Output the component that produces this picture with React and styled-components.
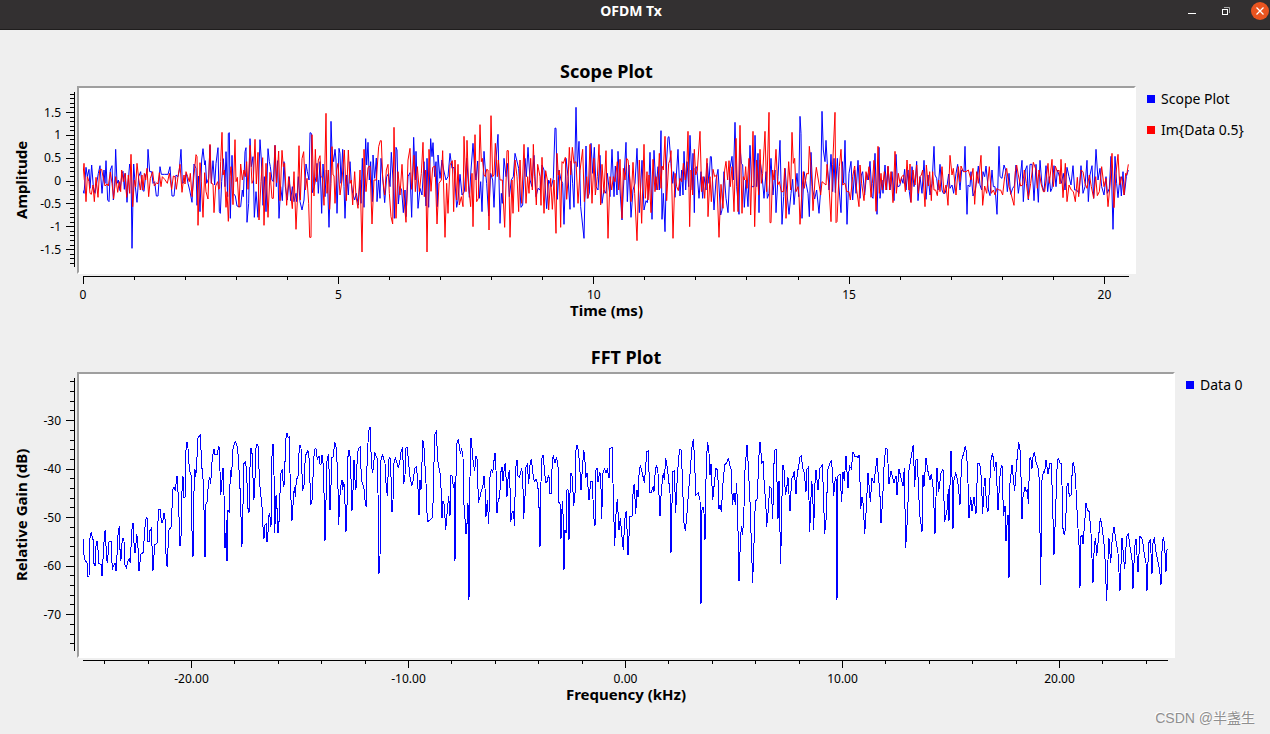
import React from "react";
import styled, { createGlobalStyle } from "styled-components";

const GlobalStyle = createGlobalStyle`
  *, *::before, *::after { box-sizing: border-box; }
  body {
    margin: 0;
    background: #efefef;
    color: #000;
    font-family: "Noto Sans", "Open Sans", "Noto Sans CJK SC", sans-serif;
  }
`;

/* Traces are kept as runs of "x,y" samples, each run with its own origin. */
const SCOPE_RE = [
  [0, 180, "248,390 252,400 258,322 262,350 267,328 270,385 275,315 280,380 285,400 290,370 295,340 300,317 306,400 312,330 315,370 318,302 323,420 327,425 331,330 336,317 340,420 344,380 347,268 351,370 355,360 360,392 366,340 369,334 373,388 376,340 381,427 385,360 389,312 393,330 396,565 401,312 406,380 411,427 416,350 422,335 427,390 432,394 437,345 442,335 444,268 449,335 455,335 459,370 464,365 469,408 474,408 480,320 484,343 494,343 504,343 510,320 516,408 522,408 528,345 534,350 538,330 543,268 547,370 553,365 559,340 564,370 569,390 576,427 582,312 588,325 591,436 595,348 600,455 605,300 609,266 614,315 616,302 620,370 626,355 630,256 634,370 639,302 644,375 648,310 654,263 658,455 661,460 665,365 670,296 675,380 678,275 683,410 685,220 688,218 691,475 696,286 700,400 706,408 711,438 717,440 722,440 727,390 730,410 735,275 738,263 741,487 746,430 750,236 754,320 759,290 763,472 768,395 774,472 777,330 780,239 784,300 789,436 793,350 798,455 804,266 808,305 811,320 816,360 820,365 825,256 829,380 833,302 837,475 842,380 847,422 852,305 856,380 862,420 868,350 872,422 877,380 882,425 888,400 890,425 895,350 900,425 906,450 912,420 918,312 922,335 927,360 930,218 934,220 937,398 943,380 948,350 951,310 955,400 960,305 965,460 969,312 975,410 979,330 983,380 987,502 990,400 993,184 996,270 1001,305 1005,268 1008,300 1011,460 1017,265"],
  [1020, 240, "0,220 3,310 8,208 12,320 15,415 20,285 25,345 30,245 34,310 38,340 44,360 49,340 55,375 60,300 63,370 67,235 72,382 77,176 80,255 84,187 88,300 92,245 97,365 99,225 104,295 109,234 111,365 116,300 120,355 123,235 128,290 134,368 140,290 146,280 150,320 154,217 159,300 163,415 168,202 171,210 175,372 180,320 185,330 190,398 195,330 198,410 204,290 210,278 215,412 221,172 226,300 228,214 234,385 240,325 246,345 252,245 258,378 261,235 266,382 272,176 276,230 279,188 284,290 288,245 292,380 294,225 300,295 306,240 311,270 318,300 324,290 330,220 336,265 342,262 350,382 354,360 360,283 366,345 373,335 380,235 388,352 393,270 399,190 403,250 408,300 413,243 418,355 422,305 426,395 432,214 436,270 440,310 446,408 452,280 458,300 462,382 468,240 474,163 480,430 484,340 487,370 492,235 498,290 502,250 508,350 514,300 520,290 525,220 530,240 536,265 543,382 548,375 555,235 559,290 564,202 570,300 576,320 582,226 588,350 594,325 600,330 606,255 612,270 620,386 626,300 634,320 640,295 645,144 648,145 652,358 657,270 663,300 668,310 672,433 678,235 684,290 690,388 693,243 698,310 702,382 708,82 712,260 717,184 722,380 732,475 738,198 742,355 748,340 753,190 758,280 763,202 768,320 774,330"],
  [1800, 240, "0,226 6,370 12,330 18,340 22,280 30,350 36,208 42,350 46,258 51,345 54,214 60,330 66,420 70,330 78,187 82,365 87,255 93,412 99,330 105,310 111,205 118,398 126,241 132,390 138,362 142,368 146,330 150,217 156,418 162,211 168,330 174,260 178,330 183,152 186,418 190,340 195,455 200,240 204,172 207,170 213,250 218,310 221,275 225,352 230,270 234,208 240,348 245,270 249,345 252,214 257,330 261,245 266,320 270,166 277,330 279,220 283,398 285,265 290,260 297,355 303,275 308,355 312,290 318,330 322,250 327,310 331,230 334,230 342,390 348,300 354,268 362,405 366,390 372,275 378,355 384,398 390,265 396,229 400,300 405,127 410,320 417,403 420,200 424,250 428,255 433,382 438,300 444,380 450,196 455,320 462,320 465,166 470,320 474,220 477,398 480,240 486,285 492,355 498,275 502,355 507,340 513,235 519,345 525,270 528,398 534,290 540,181 546,433 551,350 555,265 560,330 567,403 573,340 578,298 582,374 586,330 591,280 596,350 600,109 603,160 606,415 612,275 618,310 624,340 628,410 633,217 638,330 644,357 650,330 657,400 662,330 666,94 670,210 675,245 678,181 683,270 687,330 693,223 698,335 702,235 706,338 712,235 716,310 723,398 727,245 731,310 735,181 741,433 747,280 753,244 758,360 764,270 768,340 774,241"],
  [2580, 240, "0,355 4,285 8,275 14,345 20,280 25,300 30,244 36,350 39,355 45,220 51,403 57,202 60,355 66,300 69,340 75,255 80,330 84,260 90,330 96,275 102,362 108,223 113,320 119,318 125,295 129,310 134,268 138,330 144,270 148,335 152,365 156,260 162,320 166,300 170,244 174,362 180,290 186,340 192,241 198,358 204,285 210,345 216,310 222,199 225,285 230,295 234,330 240,253 246,330 250,340 255,340 261,318 266,282 270,325 276,315 281,340 288,280 293,253 300,330 305,270 312,275 315,199 321,403 324,315 330,320 333,275 339,348 346,330 350,300 355,258 360,315 365,330 369,275 374,290 378,258 385,330 390,347 396,270 400,320 405,320 411,403 417,199 420,290 426,295 432,255 437,270 442,335 447,280 452,343 458,325 463,318 468,255 475,340 480,300 486,241 490,365 496,270 501,257 505,360 510,253 516,253 522,362 528,253 535,367 540,241 546,315 552,335 558,257 563,335 568,290 572,335 576,325 582,257 588,320 592,270 597,285 604,310 610,280 615,330 621,262 627,290 633,315 639,257 644,330 650,330 657,340 663,257 669,340 675,320 681,241 685,365 690,285 696,257 701,355 708,208 714,300 720,265 725,320 732,345 738,290 742,340 748,325 753,229 759,448 765,229 770,310 774,353 780,290 784,348 789,275 793,345 799,290 805,270"],
];

const SCOPE_IM = [
  [0, 180, "248,360 252,310 258,425 262,350 267,365 270,400 274,403 279,375 283,425 288,352 294,412 299,330 305,328 309,350 315,378 321,372 325,378 331,336 336,370 341,416 347,350 353,397 358,365 362,395 365,330 370,365 375,340 380,412 385,345 389,400 393,283 398,440 403,360 407,380 411,310 416,355 421,390 426,345 429,390 433,340 437,360 441,325 446,410 451,355 458,335 463,378 470,368 474,372 478,338 483,380 487,350 494,358 502,370 508,340 515,388 520,348 525,350 529,388 534,350 540,313 546,397 552,345 555,372 558,335 563,350 568,365 571,340 576,410 582,345 588,284 591,290 594,496 600,308 604,365 609,472 614,338 618,395 624,417 627,330 630,253 634,370 639,372 642,458 647,378 653,365 656,388 659,385 662,305 666,217 669,345 673,330 678,442 681,395 685,484 690,350 693,320 699,434 705,239 708,365 712,352 717,442 722,312 727,360 732,330 736,350 740,305 744,388 750,256 756,370 760,360 765,238 769,372 774,277 777,480 783,365 788,293 792,496 798,310 804,472 810,337 816,415 820,415 825,256 830,368 836,273 840,422 846,271 850,320 854,310 860,436 866,350 872,400 877,446 882,335 888,508 893,400 897,257 901,420 906,296 911,275 916,390 921,355 926,430 929,532 933,532 936,224 942,408 946,268 950,365 955,300 960,287 963,350 967,352 972,436 978,160 981,400 985,330 989,448 993,370 996,260 999,345 1002,347 1005,430 1010,330 1014,310"],
  [1020, 240, "0,345 6,300 13,210 19,362 25,210 30,310 34,300 38,375 44,275 48,350 54,385 60,270 66,516 72,208 78,335 84,262 90,258 96,432 102,300 109,300 116,200 121,182 124,182 128,295 134,345 139,270 144,253 148,340 153,410 158,432 162,142 168,415 174,275 180,345 186,253 192,360 198,427 204,240 210,205 215,328 222,226 226,335 232,260 238,335 244,280 249,187 253,350 257,270 261,516 267,208 273,334 278,262 285,258 291,432 297,310 304,300 308,212 315,472 320,310 324,400 330,255 337,242 341,395 345,240 350,360 354,253 358,375 364,350 369,380 372,169 378,335 381,181 386,320 392,380 396,280 399,440 405,164 410,365 415,355 420,134 424,245 427,235 432,285 436,290 440,268 444,270 447,450 453,107 458,290 462,285 466,190 472,290 475,240 480,300 487,300 494,442 501,212 505,212 510,472 516,300 519,400 525,240 531,290 536,395 540,240 545,370 552,193 558,370 563,290 567,340 572,235 577,330 580,193 584,290 589,375 593,253 600,290 603,376 606,232 612,400 617,272 622,300 626,390 632,295 637,388 642,300 648,460 651,220 655,285 658,272 662,442 666,245 670,250 676,232 680,358 684,300 688,202 692,285 697,202 702,250 708,245 714,370 720,272 728,208 733,365 740,290 744,355 750,193 756,370 762,235 766,345 772,290 777,193"],
  [1800, 240, "2,375 6,253 12,340 18,212 24,475 30,290 35,330 40,290 45,305 52,245 56,330 60,238 66,415 70,265 75,300 80,235 84,240 90,300 93,365 99,247 104,340 111,482 118,240 125,430 132,193 136,355 141,275 144,360 147,285 153,398 159,238 165,335 168,290 173,330 178,220 183,325 186,258 190,270 195,169 200,362 206,250 210,240 213,212 219,475 225,280 230,320 235,332 240,295 245,305 250,250 256,300 261,240 264,154 269,440 273,270 278,345 283,208 287,285 292,270 300,154 305,335 309,290 314,355 321,235 324,410 330,290 334,365 339,268 344,290 350,285 357,472 363,313 369,385 374,270 378,244 383,300 387,242 391,320 396,260 402,395 408,175 414,395 420,136 426,400 430,290 434,300 437,260 441,325 447,235 452,405 459,154 464,440 470,240 476,345 480,208 484,310 488,280 495,154 500,335 507,97 510,428 513,428 518,270 522,300 528,208 533,315 538,305 544,335 550,335 554,265 558,415 566,245 572,330 576,157 580,250 584,235 588,335 594,320 597,345 600,433 606,330 610,275 613,325 620,280 625,282 628,199 632,244 636,320 639,392 645,300 649,262 655,300 662,345 666,305 672,310 678,315 681,253 687,320 693,425 698,253 705,97 708,428 711,425 718,260 723,208 728,315 735,310 740,335 747,335 751,360 758,290 764,258 770,330 777,380"],
  [2580, 240, "0,255 5,310 12,362 18,275 22,300 27,260 33,352 37,310 42,241 48,394 54,199 58,340 63,280 67,330 73,275 78,330 84,258 89,330 93,275 99,368 105,214 109,340 115,280 120,310 125,290 131,285 136,335 141,240 147,330 150,252 153,368 159,270 165,315 170,255 175,340 180,290 184,285 188,270 195,380 199,255 205,318 209,275 214,362 218,275 222,330 227,330 232,347 236,300 240,335 246,260 252,340 258,315 264,376 270,226 276,285 280,265 288,345 295,260 300,305 303,258 310,275 318,275 325,270 333,300 339,265 344,373 350,275 355,310 363,226 368,376 374,318 380,340 388,260 394,340 400,330 405,345 411,325 416,330 422,330 428,345 434,290 440,265 447,320 454,345 462,376 466,275 470,255 475,285 482,318 488,315 493,270 499,310 505,357 512,310 520,247 528,270 532,325 537,270 543,310 550,335 554,335 564,250 568,310 576,238 580,320 586,258 592,275 597,270 600,312 603,238 609,353 616,250 621,365 627,315 634,330 640,335 646,365 652,292 656,350 663,270 669,275 675,310 681,325 688,285 694,320 701,355 707,290 712,347 718,335 725,260 732,320 738,295 744,380 750,315 756,220 762,383 768,280 774,223 779,315 785,290 792,345 797,280 800,285 805,253"],
];

const SPECTRUM = [
  [0, 1020, "250,598 250,625 253,655 258,665 262,670 263,708 267,708 269,600 272,582 274,580 278,598 280,600 281,668 285,678 288,618 291,602 294,630 296,670 300,672 304,674 306,708 310,640 314,574 317,572 319,660 323,666 326,606 333,604 336,668 338,684 345,668 348,694 352,628 355,566 358,562 361,660 364,655 366,610 369,594 372,604 375,674 379,682 384,662 388,657 391,668 394,600 397,552 400,550 403,636 406,636 410,582 413,600 417,692 423,641 430,638 434,570 438,538 441,533 444,606 448,604 450,572 454,566 459,692 464,615 472,608 475,510 481,508 484,548 488,548 492,520 495,536 499,676 502,678 506,571 514,560 518,450 522,442 526,454 530,410 532,410 536,500 540,618 543,590 547,412 549,410 551,472 555,472 558,330 561,306 564,325 568,388 574,408 577,650 579,650 583,390 585,388 587,410 590,380 593,296 598,288 601,284 604,350 607,402 611,432 614,650 616,650 617,495 622,484 625,430 629,410 632,432 637,350 642,328 645,343 652,343 656,320 658,322 662,464 665,440 668,385 671,385 674,622 677,622 679,540 681,662 683,660 684,510 688,518 691,390 695,410 698,330 704,308 707,306 711,318 715,350 718,410 722,480 725,620 728,600 730,400 732,370 736,366 740,390 743,500 747,520 749,400 753,325 757,345 761,480 764,460 767,330 771,312 775,320 778,420 783,470 788,520 790,598 793,590 794,555 799,552 801,606 803,600 806,530 809,520 813,560 816,350 818,312 821,312 824,580 828,470 830,468 833,578 836,578 839,480 843,400 847,388 850,438 853,432 857,300 861,280 864,292 868,290 870,400 873,480 876,542 880,480 883,440 886,470 889,420 894,410 897,340 900,314 903,325 908,452 912,435 916,348 924,332 928,360 932,495 936,480 940,390 943,328 948,326 952,360 957,347"],
  [960, 1230, "0,162 3,162 6,134 9,160 11,175 14,390 17,385 19,165 23,140 26,134 30,300 34,200 36,142 40,140 44,95 48,112 50,142 53,180 56,345 60,255 64,215 66,210 68,240 71,215 74,238 77,366 80,360 83,150 86,120 88,120 92,158 95,303 98,290 101,150 103,150 106,240 109,232 112,130 116,115 121,110 124,210 128,222 133,240 136,285 139,288 142,110 144,98 147,60 150,50 152,100 155,170 158,190 161,165 164,125 169,142 172,145 174,250 177,492 180,440 183,150 187,134 191,145 195,160 198,220 202,258 206,150 210,142 213,200 216,306 219,270 222,160 226,144 230,155 235,174 240,150 244,120 248,112 251,222 255,195 258,114 262,112 265,150 270,200 275,228 280,210 284,176 289,170 293,210 297,316 300,210 303,240 305,190 308,93 311,95 314,150 318,220 322,336 330,330 338,322 341,200 344,75 349,65 353,150 358,180 362,200 366,325 369,272 373,285 377,360 382,300 386,258 390,318 393,195 397,200 400,234 403,215 405,453 408,200 411,100 415,86 418,110 421,128 425,118 429,140 431,270 434,310 438,373 442,330 444,280 447,570 450,200 453,84 456,115 459,150 464,184 468,138 472,150 475,278 480,260 484,240 488,235 492,198 495,235 498,320 502,270 506,342 510,200 514,178 518,190 521,160 525,128 528,180 531,310 535,265 539,265 542,190 546,170 549,212 553,175 556,158 561,260 565,190 569,180 572,336 577,304 581,305 583,348 587,175 591,150 594,198 598,202 604,178 608,190 611,326 615,260 618,170 622,162 626,222 630,165 634,146 638,185 643,215 648,208 652,220 656,250"],
  [1620, 1230, "0,412 3,215 6,145 10,134 13,180 17,218 21,215 25,198 28,205 30,250 34,250 37,145 40,138 45,160 49,142 52,155 55,180 57,278 60,280 63,386 67,272 70,330 72,480 75,360 79,370 81,240 84,238 87,390 90,250 93,188 97,200 101,288 105,250 108,120 111,104 115,120 119,165 123,240 127,175 131,124 134,130 137,205 141,188 147,270 152,215 157,215 161,320 165,348 168,180 171,174 174,215 179,188 182,190 185,328 189,190 193,176 198,188 202,178 207,205 210,115 217,112 219,220 224,408 229,290 232,268 237,360 241,325 247,392 250,420 254,330 259,302 264,436 268,360 270,320 276,320 280,230 283,222 287,312 291,240 294,262 297,195 301,165 307,190 313,218 317,175 320,125 325,122 329,248 334,248 340,228 342,245 346,180 350,165 354,190 360,318 364,240 370,188 373,210 377,144 382,175 386,210 390,250 393,428 398,185 403,183 407,308 411,220 416,140 420,118 424,120 428,230 432,340 436,364 441,310 446,240 451,180 456,110 460,86 464,150 467,255 475,248 480,270 483,582 486,300 489,290 492,310 495,390 499,150 503,96 507,130 510,195 513,162 518,270 523,220 528,175 533,180 537,298 540,285 544,306 549,220 554,165 560,158 565,143 569,165 574,180 577,285 582,250 586,285 590,218 593,310 597,514 601,400 604,348 608,376 612,290 615,180 621,104 625,170 630,275 634,400 638,518 643,370 646,275 652,265 656,150"],
  [2280, 1230, "0,95 3,130 6,160 10,152 13,235 17,270 20,350 25,298 29,230 34,235 38,328 43,122 49,118 51,215 54,326 57,212 62,462 66,260 69,165 73,185 76,255 80,235 84,202 90,303 95,205 99,200 103,182 108,252 112,185 116,172 119,142 124,138 128,175 133,190 138,246 140,178 145,172 149,366 155,212 158,240 161,360 165,220 168,180 174,240 180,175 187,165 190,240 194,372 199,320 203,180 208,164 214,150 217,180 221,258 226,202 229,210 231,570 233,200 240,192 245,275 249,185 253,212 258,138 264,234 268,168 274,176 279,125 284,138 290,138 294,145 298,134 302,296 306,260 310,285 314,372 318,310 324,188 331,276 336,205 342,220 347,175 351,144 356,215 359,230 363,340 368,270 373,148 378,114 382,118 387,222 393,182 402,218 408,198 411,255 417,176 422,200 429,228 433,174 437,414 443,310 447,180 453,145 460,104 464,230 468,150 472,148 476,250 480,320 486,366 489,195 492,230 498,144 503,180 510,210 514,192 520,240 525,372 528,260 531,173 536,245 543,190 549,178 554,335 561,300 565,238 567,332 573,122 576,200 579,356 582,210 587,190 593,210 600,284 605,150 611,130 616,107 620,130 624,220 627,324 632,260 636,302 642,262 648,312 653,160 657,160"],
  [2940, 1200, "0,198 4,235 8,342 12,260 15,234 20,320 24,335 28,270 33,180 38,158 43,212 48,185 54,330 60,230 64,197 67,200 70,348 75,318 78,424 83,345 86,345 87,534 90,250 96,195 100,235 104,274 110,190 116,125 120,150 123,230 126,358 129,290 135,260 139,275 142,270 145,312 149,175 152,172 156,206 159,170 163,155 168,185 174,205 178,240 182,554 186,240 190,215 194,218 198,180 204,222 210,190 214,190 218,320 222,465 227,330 232,180 236,176 241,192 245,190 248,380 253,405 257,380 260,260 264,250 268,290 274,285 277,200 280,185 286,225 290,310 294,385 298,450 300,564 303,410 306,405 309,432 314,370 318,308 322,330 328,335 333,400 339,548 343,430 347,415 350,468 355,420 361,354 367,385 374,450 380,603 384,480 387,415 392,490 397,410 402,380 407,415 414,460 420,573 426,415 434,508 440,410 445,402 450,440 456,480 459,567 464,440 468,416 474,516 480,408 487,418 494,470 498,490 501,573 506,430 511,418 516,522 519,430 523,412 527,450 533,480 539,510 543,555 547,420 551,412 554,440 558,516 561,450 564,447"],
];

const joinRuns = (runs) =>
  runs
    .flatMap(([ox, oy, samples]) =>
      samples.split(" ").map((pair) => {
        const [x, y] = pair.split(",").map(Number);
        return `${x + ox},${y + oy}`;
      })
    )
    .join(" ");

const steps = (from, to, step) => {
  const out = [];
  for (let i = Math.round(from / step); i <= Math.round(to / step); i += 1) {
    out.push(Math.round(i * step * 10) / 10);
  }
  return out;
};

const Window = styled.div`
  position: relative;
  min-height: 100vh;
  display: flex;
  flex-direction: column;
  background: #efefef;
`;

const TitleBar = styled.header`
  height: 30px;
  display: grid;
  grid-template-columns: 1fr auto 1fr;
  align-items: center;
  padding: 0 8px 8px 0;
  background: #333031;
  border-bottom: 1px solid #1f1d1d;
`;

const WindowTitle = styled.h1`
  grid-column: 2;
  margin: 0;
  font-size: 14px;
  line-height: 20px;
  font-weight: 700;
  color: #fff;
`;

const WindowButtons = styled.div`
  justify-self: end;
  display: flex;
  gap: 14px;
  margin-right: -8px;
`;

const WindowButton = styled.button`
  width: 20px;
  height: 20px;
  padding: 0;
  border: 0;
  background: none;
  svg { display: block; }
`;

const Plots = styled.main`
  flex: 1;
  display: flex;
  flex-direction: column;
  gap: 20px;
  padding: 26px 0 28px;
`;

const PlotGrid = styled.section`
  display: grid;
  grid-template-columns: 34px 43px minmax(0, 1fr) ${(p) => p.$legend}px;
  grid-template-rows: 30px ${(p) => p.$height}px 28px 20px;
`;

const PlotTitle = styled.h2`
  grid-area: 1 / 3;
  margin: 0;
  text-align: center;
  font-size: 18px;
  line-height: 30px;
  font-weight: 700;
`;

const YTitle = styled.div`
  grid-area: 2 / 1;
  justify-self: end;
  writing-mode: vertical-rl;
  transform: rotate(180deg);
  text-align: center;
  font-size: 15px;
  line-height: 26px;
  font-weight: 700;
`;

const XTitle = styled.div`
  grid-area: 4 / 3;
  text-align: center;
  font-size: 15px;
  line-height: 16px;
  font-weight: 700;
`;

const YScale = styled.div`
  grid-area: 2 / 2;
  padding: 6px 0 7px;
`;

const XScale = styled.div`
  grid-area: 3 / 3;
  padding: 0 7px 0 6px;
`;

const ScaleDrawing = styled.svg`
  display: block;
  width: 100%;
  height: 100%;
  overflow: visible;
  font-size: 12px;
  line { stroke: #000; stroke-width: 1; shape-rendering: crispEdges; }
`;

const Canvas = styled.div`
  grid-area: 2 / 3;
  padding: 0 5px 0 4px;
  background: #fff;
  border: 2px solid #fff;
  border-top-color: #9f9f9f;
  border-left-color: #9f9f9f;
`;

const Traces = styled.svg`
  display: block;
  width: 100%;
  height: 100%;
  polyline {
    fill: none;
    stroke-width: 1;
    vector-effect: non-scaling-stroke;
    shape-rendering: ${(p) => (p.$crisp ? "crispEdges" : "auto")};
  }
`;

const Legend = styled.ul`
  grid-area: 2 / 4;
  margin: 0;
  padding: 0 0 0 11px;
  list-style: none;
  display: flex;
  flex-direction: column;
  gap: 5px;
`;

const LegendItem = styled.li`
  display: flex;
  align-items: center;
  gap: 6px;
  font-size: 14px;
  line-height: 26px;
  white-space: nowrap;
  &::before {
    content: "";
    width: 8px;
    height: 8px;
    background: ${(p) => p.$color};
  }
`;

const Watermark = styled.footer`
  position: absolute;
  right: 15px;
  bottom: 6px;
  font-family: "Liberation Sans", "Noto Sans CJK SC", sans-serif;
  font-size: 14px;
  line-height: 20px;
  color: #8f8f8f;
  text-shadow: -1px -1px 0 #fff;
`;

function VerticalScale({ top, bottom, minor, major }) {
  const at = (v) => `${((top - v) / (top - bottom)) * 100}%`;
  return (
    <YScale>
      <ScaleDrawing>
        <line x1="40.5" x2="40.5" y1="0" y2="100%" />
        {minor.map((v) => (
          <line key={v} x1={major.includes(v) ? 32 : 36} x2="40" y1={at(v)} y2={at(v)} />
        ))}
        {major.map((v) => (
          <g key={v}>
            <line x1="32" x2="40" y1={at(v)} y2={at(v)} />
            <text x="27" y={at(v)} dy="4" textAnchor="end">{v}</text>
          </g>
        ))}
      </ScaleDrawing>
    </YScale>
  );
}

function HorizontalScale({ left, right, minor, major, digits }) {
  const at = (v) => `${((v - left) / (right - left)) * 100}%`;
  return (
    <XScale>
      <ScaleDrawing>
        <line x1="0" x2="100%" y1="2.5" y2="2.5" />
        {minor.map((v) => (
          <line key={v} x1={at(v)} x2={at(v)} y1="3" y2={major.includes(v) ? 10 : 6} />
        ))}
        {major.map((v) => (
          <text key={v} x={at(v)} y="25" textAnchor="middle">{v.toFixed(digits)}</text>
        ))}
      </ScaleDrawing>
    </XScale>
  );
}

function Plot({ title, xTitle, yTitle, height, legendWidth, x, y, view, crisp, series }) {
  return (
    <PlotGrid $height={height} $legend={legendWidth} aria-label={title}>
      <PlotTitle>{title}</PlotTitle>
      <YTitle>{yTitle}</YTitle>
      <VerticalScale {...y} />
      <Canvas>
        <Traces $crisp={crisp} viewBox={view} preserveAspectRatio="none" aria-hidden="true">
          {series.map((s) => (
            <polyline key={s.name} points={joinRuns(s.runs)} stroke={s.color} />
          ))}
        </Traces>
      </Canvas>
      <Legend>
        {series.map((s) => (
          <LegendItem key={s.name} $color={s.color}>{s.name}</LegendItem>
        ))}
      </Legend>
      <HorizontalScale {...x} />
      <XTitle>{xTitle}</XTitle>
    </PlotGrid>
  );
}

export default function App() {
  return (
    <Window>
      <GlobalStyle />
      <TitleBar>
        <WindowTitle>OFDM Tx</WindowTitle>
        <WindowButtons>
          <WindowButton type="button" aria-label="Minimize">
            <svg width="20" height="20"><path d="M6 12.5h8" stroke="#fff" /></svg>
          </WindowButton>
          <WindowButton type="button" aria-label="Restore">
            <svg width="20" height="20" fill="none">
              <path d="M8 6.500h5.500v5.500" stroke="#aaa" />
              <rect x="6.500" y="8.500" width="5" height="5" stroke="#fff" />
            </svg>
          </WindowButton>
          <WindowButton type="button" aria-label="Close">
            <svg width="20" height="20">
              <circle cx="10" cy="10" r="9" fill="#e95420" />
              <path d="M6.500 6.500l7 7M13.500 6.500l-7 7" stroke="#fff" strokeWidth="1.300" />
            </svg>
          </WindowButton>
        </WindowButtons>
      </TitleBar>
      <Plots>
        <Plot
          title="Scope Plot"
          xTitle="Time (ms)"
          yTitle="Amplitude"
          height={188}
          legendWidth={134}
          view="249 264 3138 552"
          x={{ left: 0, right: 20.48, minor: steps(0, 20, 1), major: [0, 5, 10, 15, 20], digits: 0 }}
          y={{ top: 1.95, bottom: -1.88, minor: steps(-1.8, 1.9, 0.1), major: [1.5, 1, 0.5, 0, -0.5, -1, -1.5] }}
          series={[
            { name: "Scope Plot", color: "#0000ff", runs: SCOPE_RE },
            { name: "Im{Data 0.5}", color: "#ff0000", runs: SCOPE_IM },
          ]}
        />
        <Plot
          title="FFT Plot"
          xTitle="Frequency (kHz)"
          yTitle="Relative Gain (dB)"
          height={286}
          legendWidth={95}
          view="249 1122 3255 846"
          crisp
          x={{ left: -25, right: 25, minor: steps(-24, 24, 2), major: [-20, -10, 0, 10, 20], digits: 2 }}
          y={{ top: -21.2, bottom: -77.5, minor: steps(-76, -22, 2), major: [-30, -40, -50, -60, -70] }}
          series={[{ name: "Data 0", color: "#0000ff", runs: SPECTRUM }]}
        />
      </Plots>
      <Watermark>CSDN @半盏生</Watermark>
    </Window>
  );
}
